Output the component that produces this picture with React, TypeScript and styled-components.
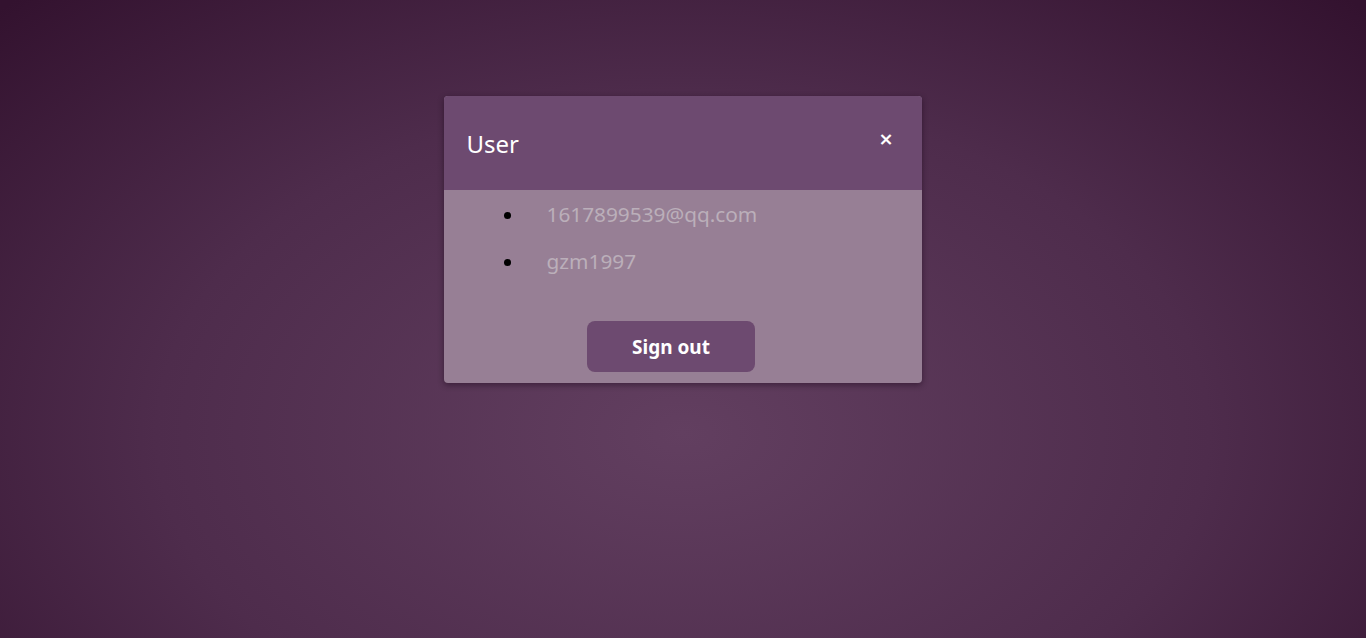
import React from "react";
import styled, { createGlobalStyle } from "styled-components";

const Global = createGlobalStyle`
  html, body { margin: 0; padding: 0; height: 100%; }
  body {
    font-family: "Noto Sans", "Open Sans", sans-serif;
    background: radial-gradient(ellipse 70% 95% at 50% 68%, #623f60 0%, #4e2c4c 55%, #33122f 100%);
    min-height: 638px;
  }
`;

const Page = styled.div`
  width: 1366px;
  height: 638px;
  display: flex;
  justify-content: center;
  align-items: flex-start;
  padding-top: 96px;
  box-sizing: border-box;
`;

const Dialog = styled.div`
  width: 478px;
  border-radius: 4px;
  overflow: hidden;
  box-shadow: 0 2px 6px rgba(20, 0, 20, 0.45);
  background: #977f95;
  margin-left: -1px;
`;

const Header = styled.div`
  height: 94px;
  background: #6d4a70;
  display: flex;
  align-items: flex-start;
  justify-content: space-between;
  padding: 0 28px 0 23px;
  box-sizing: border-box;
`;

const Title = styled.h2`
  margin: 30px 0 0;
  font-size: 24px;
  font-weight: 400;
  color: #ffffff;
  line-height: 36px;
`;

const Close = styled.button`
  margin-top: 34px;
  border: none;
  background: transparent;
  color: #ffffff;
  font-size: 18px;
  font-weight: 700;
  padding: 0;
  line-height: 18px;
  cursor: pointer;
  font-family: "DejaVu Sans", sans-serif;
`;

const Body = styled.div`
  display: flex;
  flex-direction: column;
  align-items: center;
  padding: 0 0 11px;
`;

const List = styled.ul`
  align-self: stretch;
  margin: 9px 0 0;
  padding: 0 0 0 81px;
  color: #000;
`;

const Item = styled.li`
  font-size: 20.8px;
  line-height: 30px;
  margin-bottom: 17px;
  padding-left: 22px;
`;

const ItemText = styled.span`
  color: #bbafba;
`;

const SignOut = styled.button`
  margin-top: 28px;
  width: 168px;
  height: 51px;
  border: none;
  border-radius: 8px;
  background: #6d4a70;
  color: #ffffff;
  font-family: "Noto Sans", "Open Sans", sans-serif;
  font-weight: 700;
  font-size: 19px;
  cursor: pointer;
  margin-left: -23px;
`;

export default function App() {
  return (
    <>
      <Global />
      <Page>
        <Dialog>
          <Header>
            <Title>User</Title>
            <Close aria-label="close">×</Close>
          </Header>
          <Body>
            <List>
              <Item>
                <ItemText>1617899539@qq.com</ItemText>
              </Item>
              <Item>
                <ItemText>gzm1997</ItemText>
              </Item>
            </List>
            <SignOut>Sign out</SignOut>
          </Body>
        </Dialog>
      </Page>
    </>
  );
}
